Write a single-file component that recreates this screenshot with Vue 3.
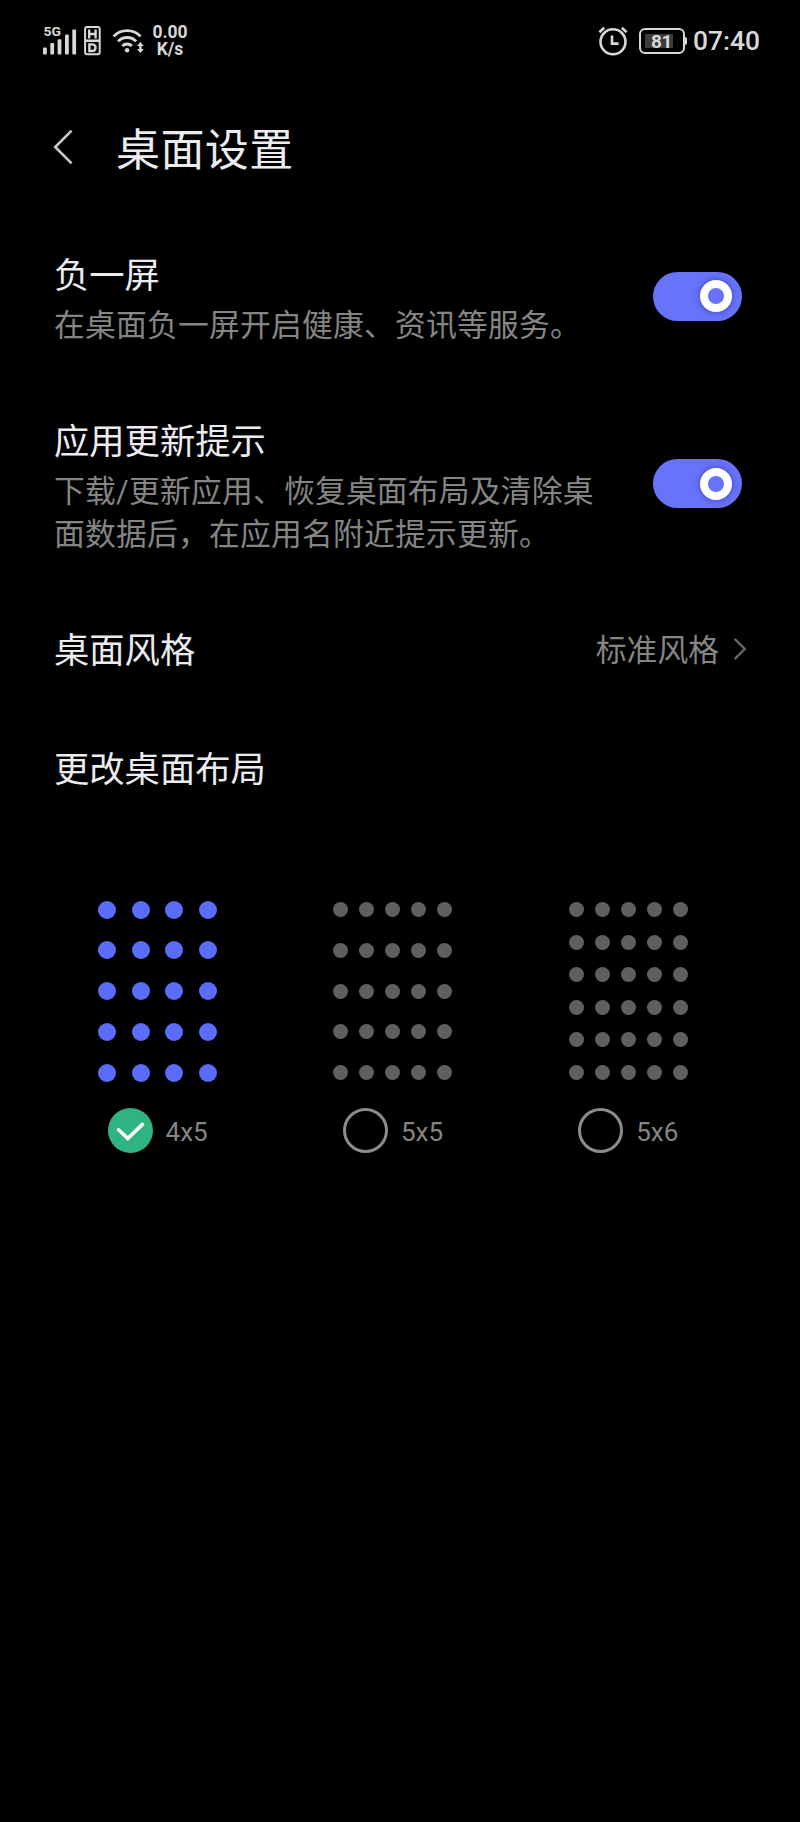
<template>
  <div class="screen">

    <!-- STATUS BAR -->
    <div class="status-bar">
      <div class="status-left">
        <svg class="signal" width="34" height="30" viewBox="0 0 34 30">
          <text x="0.5" y="10" class="net" textLength="17.5" lengthAdjust="spacingAndGlyphs">5G</text>
          <g fill="#d8d8d8">
            <rect x="0" y="21.4" width="3.8" height="7" rx="1" />
            <rect x="7.3" y="17" width="3.8" height="11.4" rx="1" />
            <rect x="14.6" y="13.2" width="3.8" height="15.2" rx="1" />
            <rect x="22" y="8.4" width="3.8" height="20" rx="1" />
            <rect x="29.3" y="3.4" width="3.8" height="25" rx="1" />
          </g>
        </svg>

        <svg class="hd" width="17" height="30" viewBox="0 0 17 30" fill="none" stroke="#d8d8d8">
          <rect x="1.1" y="1.1" width="14.6" height="27.2" rx="2" stroke-width="2" />
          <path d="M5.2 3.6v8.8M11.6 3.6v8.8M5 8h6.6M1.6 14.8h13.8" stroke-width="2.4" />
          <path d="M5.4 18.4h2.9a3.3 3.3 0 0 1 0 6.6H5.4z" stroke-width="2.4" />
        </svg>

        <svg class="wifi" width="34" height="26" viewBox="0 0 34 26" fill="none" stroke="#d8d8d8">
          <path d="M1.6 8.4a18.6 18.6 0 0 1 27 0M6 13.4a12.6 12.6 0 0 1 18.2 0M10.3 18a6.8 6.8 0 0 1 9.6 0" stroke-width="2.8" />
          <circle cx="15.1" cy="22.2" r="2.2" fill="#d8d8d8" stroke="none" />
          <path d="M28.4 14l3.4 4h-2.2v3h2.2l-3.4 4-3.4-4h2.2v-3H25z" fill="#d8d8d8" stroke="none" />
        </svg>

        <div class="speed">
          <span>0.00</span>
          <span>K/s</span>
        </div>
      </div>

      <div class="status-right">
        <svg class="alarm" width="30" height="30" viewBox="0 0 30 30" fill="none" stroke="#d8d8d8">
          <circle cx="15" cy="15.8" r="12.5" stroke-width="2.6" />
          <path d="M14 9.4v8.2h6.6" stroke-width="2.6" />
          <path d="M1.4 6.2l4.8-4.4M28.6 6.2l-4.8-4.4" stroke-width="2.6" />
        </svg>

        <div class="battery">
          <div class="battery-body">
            <span class="battery-level">81</span>
          </div>
          <div class="battery-tip"></div>
        </div>

        <span class="clock">07:40</span>
      </div>
    </div>

    <!-- HEADER -->
    <div class="header">
      <svg class="back" width="20" height="36" viewBox="0 0 20 36" fill="none" stroke="#c9c9cb" stroke-width="2.6">
        <path d="M18.6 1.6L2.2 18l16.4 16.4" />
      </svg>
      <h1>桌面设置</h1>
    </div>

    <!-- SWITCHES -->
    <div v-for="item in switches" :key="item.title" class="item">
      <div class="item-text">
        <div class="item-title">{{ item.title }}</div>
        <div class="item-desc">{{ item.desc }}</div>
      </div>
      <button class="toggle" :class="{ off: !item.on }" @click="item.on = !item.on">
        <span class="knob"></span>
      </button>
    </div>

    <!-- STYLE -->
    <div class="item link">
      <div class="item-title">桌面风格</div>
      <div class="value">
        <span>标准风格</span>
        <svg width="14" height="24" viewBox="0 0 14 24" fill="none" stroke="#666" stroke-width="2.4">
          <path d="M1.6 1.8L11.8 12 1.6 22.2" />
        </svg>
      </div>
    </div>

    <!-- LAYOUT -->
    <div class="item layout-title">
      <div class="item-title">更改桌面布局</div>
    </div>

    <div class="layouts">
      <div
        v-for="l in layouts"
        :key="l.name"
        class="layout"
        :class="{ active: selected === l.name }"
        @click="selected = l.name"
      >
        <div class="dots">
          <div v-for="r in l.rows" :key="r" class="dot-row">
            <span v-for="c in l.cols" :key="c" class="dot"></span>
          </div>
        </div>
        <div class="option">
          <span class="radio">
            <svg v-if="selected === l.name" width="45" height="45" viewBox="0 0 45 45" fill="none" stroke="#fff" stroke-width="3.6" stroke-linecap="round">
              <path d="M10.6 21.8l9.2 8.8 14.6-14.2" />
            </svg>
          </span>
          <span class="option-name">{{ l.name }}</span>
        </div>
      </div>
    </div>
  </div>
</template>

<script setup>
import { ref } from "vue";

const switches = ref([
  {
    title: "负一屏",
    desc: "在桌面负一屏开启健康、资讯等服务。",
    on: true
  },
  {
    title: "应用更新提示",
    desc: "下载/更新应用、恢复桌面布局及清除桌\n面数据后，在应用名附近提示更新。",
    on: true
  }
]);

const layouts = [
  { name: "4x5", cols: 4, rows: 5 },
  { name: "5x5", cols: 5, rows: 5 },
  { name: "5x6", cols: 5, rows: 6 }
];

const selected = ref("4x5");
</script>

<style>
body {
  margin: 0;
  background: #000;
}
</style>

<style scoped>
.screen {
  width: 800px;
  height: 1822px;
  background: #000;
  color: #ececf0;
  font-family: Roboto, "Noto Sans CJK SC", sans-serif;
  overflow: hidden;
}

/* ------------------------
   STATUS BAR
------------------------ */
.status-bar {
  height: 82px;
  padding: 0 40px 0 43px;
  box-sizing: border-box;
  display: flex;
  align-items: center;
  justify-content: space-between;
  color: #d8d8d8;
}

.status-left,
.status-right {
  display: flex;
  align-items: center;
}

.signal {
  overflow: visible;
}

.net {
  font: bold 12.5px Roboto, sans-serif;
  fill: #d8d8d8;
}

.hd {
  margin-left: 7px;
}

.wifi {
  margin-left: 11px;
}

.speed {
  width: 38px;
  margin-left: 5px;
  display: flex;
  flex-direction: column;
  align-items: center;
  font-size: 17.5px;
  font-weight: 700;
  line-height: 17px;
}

.battery {
  display: flex;
  align-items: center;
  margin-left: 11px;
}

.battery-body {
  width: 46px;
  height: 26px;
  padding: 4px;
  box-sizing: border-box;
  border: 2px solid #d8d8d8;
  border-radius: 6px;
}

.battery-level {
  display: block;
  width: 28px;
  height: 14px;
  padding-left: 6px;
  background: #3a3a3a;
  font-size: 19px;
  font-weight: 700;
  line-height: 15px;
  letter-spacing: -0.5px;
  box-sizing: border-box;
}

.battery-tip {
  width: 2px;
  height: 8px;
  background: #d8d8d8;
  border-radius: 0 2px 2px 0;
}

.clock {
  margin-left: 6px;
  font-size: 26.4px;
  font-weight: 500;
}

/* ------------------------
   HEADER
------------------------ */
.header {
  height: 130px;
  padding-left: 53px;
  display: flex;
  align-items: center;
}

h1 {
  margin: 7px 0 0 43px;
  font-size: 44px;
  font-weight: 400;
  line-height: 64px;
  letter-spacing: 0.4px;
}

/* ------------------------
   ITEMS
------------------------ */
.item {
  padding: 42px 58px 31px 54px;
  display: flex;
  align-items: center;
  justify-content: space-between;
}

.item-title {
  font-size: 35.3px;
  line-height: 44px;
}

.item-desc {
  margin-top: 6px;
  font-size: 30.8px;
  line-height: 43px;
  letter-spacing: 0.2px;
  color: #858585;
  white-space: pre;
}

.toggle {
  width: 89px;
  height: 49px;
  margin-bottom: 9px;
  padding: 0 10px 0 0;
  border: none;
  border-radius: 25px;
  background: #6773f8;
  display: flex;
  align-items: center;
  justify-content: flex-end;
}

.toggle.off {
  padding: 0 0 0 10px;
  background: #444;
  justify-content: flex-start;
}

.knob {
  width: 32px;
  height: 32px;
  box-sizing: border-box;
  border: 8px solid #fff;
  border-radius: 50%;
  box-shadow: 0 0 6px rgba(40, 30, 160, 0.6);
}

.item.link {
  height: 120px;
  padding: 4px 53px 0 54px;
}

.value {
  display: flex;
  align-items: center;
  gap: 14px;
  font-size: 30.8px;
  line-height: 44px;
  color: #858585;
}

.value svg {
  margin-bottom: 5px;
}

.item.layout-title {
  height: 118px;
  padding-top: 0;
  padding-bottom: 0;
}

/* ------------------------
   LAYOUT PICKER
------------------------ */
.layouts {
  margin: 71px 54px 0 40px;
  display: grid;
  grid-template-columns: repeat(3, 1fr);
}

.layout {
  display: flex;
  flex-direction: column;
  align-items: center;
}

.dots {
  width: 119px;
  height: 178px;
  display: flex;
  flex-direction: column;
  justify-content: space-between;
  padding: 2px 0;
}

.dot-row {
  display: flex;
  justify-content: space-between;
}

.dot {
  width: 15px;
  height: 15px;
  border-radius: 50%;
  background: #5f5f5f;
}

.active .dots {
  height: 181px;
  padding: 0.5px 0;
}

.active .dot {
  width: 18px;
  height: 18px;
  background: #5a6cfa;
}

.option {
  margin-top: 26px;
  display: flex;
  align-items: center;
  gap: 13px;
}

.radio {
  width: 45px;
  height: 45px;
  box-sizing: border-box;
  border: 3px solid #8c8c8c;
  border-radius: 50%;
}

.active .radio {
  border: none;
  background: #2fb380;
}

.option-name {
  margin-top: 2px;
  font-size: 26px;
  color: #858585;
}
</style>
